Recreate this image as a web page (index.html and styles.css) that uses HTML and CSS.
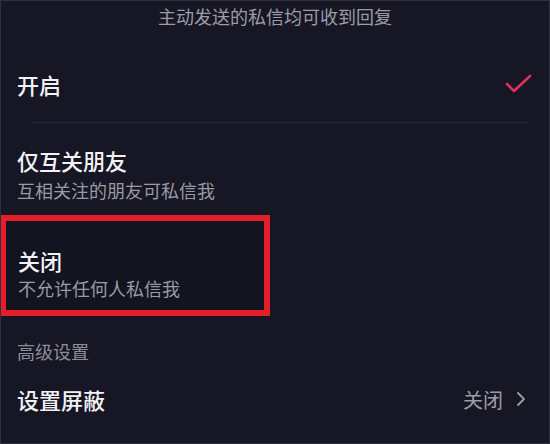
FILE: index.html
```html
<!DOCTYPE html>
<html lang="zh-CN">
<head>
    <meta charset="UTF-8">
    <meta name="viewport" content="width=device-width, initial-scale=1.0">
    <title>私信设置</title>
    <link rel="stylesheet" href="styles.css">
</head>
<body>
    <div class="page">
        <p class="notice">主动发送的私信均可收到回复</p>

        <div class="option option-row first">
            <span class="title">开启</span>
            <svg class="check" width="28" height="22" viewBox="0 0 28 22">
                <polyline points="2,11 9,18 25,3" fill="none" stroke="#e2305a" stroke-width="2.6" stroke-linecap="round" stroke-linejoin="round"/>
            </svg>
        </div>
        <div class="divider"></div>

        <div class="option friends">
            <div class="title">仅互关朋友</div>
            <div class="sub">互相关注的朋友可私信我</div>
        </div>

        <div class="option highlight">
            <div class="title">关闭</div>
            <div class="sub">不允许任何人私信我</div>
        </div>

        <p class="section">高级设置</p>

        <div class="option option-row block">
            <span class="title">设置屏蔽</span>
            <span class="value">关闭
                <svg class="chevron" width="12" height="16" viewBox="0 0 12 16">
                    <polyline points="3,2 9,8 3,14" fill="none" stroke="#9d9da6" stroke-width="1.8" stroke-linecap="round" stroke-linejoin="round"/>
                </svg>
            </span>
        </div>
    </div>
</body>
</html>
```

FILE: styles.css
```css
body {
    margin: 0;
    padding: 0;
    background-color: #161624;
    font-family: "Noto Sans CJK SC", "Noto Sans", sans-serif;
}

.page {
    box-sizing: border-box;
    width: 550px;
    height: 444px;
    border: 1px solid #2f2f40;
    background-color: #161624;
    overflow: hidden;
}

p {
    margin: 0;
}

.notice {
    height: 31px;
    line-height: 30px;
    font-size: 18px;
    color: #9c9ca5;
    text-align: center;
}

.option {
    padding: 0 16px;
}

.title {
    font-size: 22px;
    line-height: 30px;
    color: #f2f2f4;
    font-weight: 500;
}

.sub {
    font-size: 18px;
    line-height: 26px;
    color: #9a9aa3;
}

.option-row {
    display: flex;
    align-items: center;
    justify-content: space-between;
    height: 32px;
}

.option-row.first {
    margin-top: 36px;
    padding-right: 16px;
}

.check {
    margin-top: -1px;
}

.divider {
    height: 1px;
    margin: 22px 21px 0 31px;
    background-color: #262634;
}

.friends {
    margin-top: 22px;
}

.friends .sub {
    margin-top: 2px;
}

/* box drawn round the "off" option */
.highlight {
    box-sizing: border-box;
    width: 270px;
    margin: 12px 0 0 -1px;
    padding: 24px 0 9px 12px;
    border: 6px solid #e41f2a;
    background-color: #121420;
}

.section {
    margin-top: 22px;
    font-size: 18px;
    line-height: 26px;
    color: #8e8e98;
    padding-left: 16px;
}

.option-row.block {
    margin-top: 19px;
    padding-right: 22px;
}

.value {
    display: flex;
    align-items: center;
    gap: 12px;
    font-size: 20px;
    color: #9d9da6;
}
```
